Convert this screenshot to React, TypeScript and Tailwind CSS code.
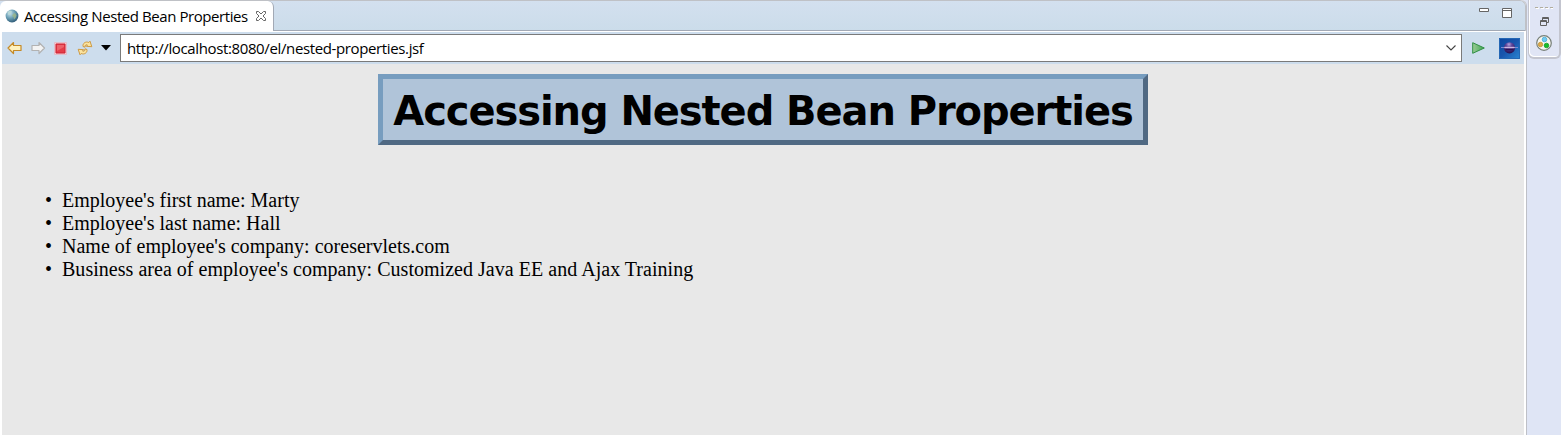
const items = [
  { text: "Employee's first name: Marty", cls: 'tracking-normal' },
  { text: "Employee's last name: Hall", cls: 'tracking-normal' },
  { text: "Name of employee's company: coreservlets.com", cls: 'tracking-[0.010px]' },
  { text: "Business area of employee's company: Customized Java EE and Ajax Training", cls: 'tracking-[0.030px]' },
];

function Globe() {
  return (
    <svg width="14" height="14" viewBox="0 0 14 14" className="shrink-0">
      <defs>
        <radialGradient id="globe" cx="35%" cy="30%" r="75%">
          <stop offset="0" stopColor="#c4e0ea" />
          <stop offset=".5" stopColor="#6b9fb5" />
          <stop offset="1" stopColor="#2c5875" />
        </radialGradient>
      </defs>
      <circle cx="7" cy="7" r="6.4" fill="url(#globe)" />
      <path d="M2.500 3 5 1.500 7 2.500 5.500 5 3.500 6Z" fill="#b9d8d8" />
      <path d="M8 5 10 4l1.500 2.500-1 2.500-1.500 1.500-.5-2.500-1.500-1Z" fill="#9db888" opacity=".8" />
    </svg>
  );
}

function Arrow({ muted = false }: { muted?: boolean }) {
  return muted ? (
    <svg width="15" height="14" viewBox="0 0 15 14" className="shrink-0">
      <path d="M8 1.500 13.500 7 8 12.500V9.500H1V4.500H8Z" fill="#f3f3f3" stroke="#b2b2b2" strokeWidth="1.200" strokeLinejoin="round" />
    </svg>
  ) : (
    <svg width="15" height="14" viewBox="0 0 15 14" className="shrink-0">
      <path d="M6.500 1.500 1 7 6.500 12.500V9.500H14V4.500H6.500Z" fill="#fff2be" stroke="#c58a27" strokeWidth="1.200" strokeLinejoin="round" />
    </svg>
  );
}

function Refresh() {
  return (
    <svg width="16" height="16" viewBox="0 0 16 16" className="shrink-0">
      <g fill="#fbe3a0" stroke="#cb9233" strokeWidth=".9" strokeLinejoin="round">
        <path d="M6 6.500C5.500 3.500 8.500 1 11.800 2.500L13 1.200 14.800 6.700 9.300 6.300 10.500 5C9 4.200 8 5 8 7.200Z" />
        <path d="M10 9.500C10.500 12.500 7.500 15 4.200 13.500L3 14.800 1.200 9.300 6.700 9.700 5.500 11C7 11.800 8 11 8 8.800Z" />
      </g>
    </svg>
  );
}

function EclipseLogo() {
  return (
    <svg width="21" height="21" viewBox="0 0 21 21" className="shrink-0">
      <defs>
        <linearGradient id="sky" x1="0" y1="0" x2="1" y2="1">
          <stop stopColor="#0c469f" />
          <stop offset=".5" stopColor="#1956ad" />
          <stop offset="1" stopColor="#2a86d3" />
        </linearGradient>
        <radialGradient id="planet" cx="45%" cy="20%" r="75%">
          <stop stopColor="#b7a4dc" />
          <stop offset=".35" stopColor="#5c459b" />
          <stop offset="1" stopColor="#281457" />
        </radialGradient>
      </defs>
      <rect width="21" height="21" fill="url(#sky)" />
      <path d="M.5.500h20v20H.5Z" fill="none" stroke="#2467b4" />
      <circle cx="10.500" cy="9.800" r="5.600" fill="url(#planet)" />
      <path d="M2 9.500h17" stroke="#7c86d0" strokeWidth="1" />
      <path d="M5.500 9.500h10" stroke="#cfb7df" strokeWidth="1.400" />
      <path d="M6.500 11.500h8" stroke="#2b1255" strokeWidth="1.200" />
    </svg>
  );
}

function TabBar() {
  return (
    <div className="flex h-[31px] shrink-0 rounded-tr-[6px] border-t border-r border-[#bfc1c6] bg-linear-to-b from-[#d3e0ef] to-[#cbdcea]">
      <div className="flex h-[30px] w-[274px] items-center rounded-t-[6px] border-r border-[#a2a9b5] bg-white pl-[5px]">
        <Globe />
        <span className="ml-[5px] w-[224px] whitespace-nowrap font-['Open_Sans',sans-serif] text-[15px] tracking-[-0.430px] text-black">Accessing Nested Bean Properties</span>
        <svg width="12" height="12" viewBox="0 0 12 12" className="ml-[7px]">
          <path d="M1.500 1.500H3.500L6 4 8.500 1.500H10.500V3.500L8 6l2.500 2.500v2h-2L6 8 3.500 10.500h-2v-2L4 6 1.500 3.500Z" fill="none" stroke="#666" />
        </svg>
      </div>
      <div className="flex flex-1 justify-end border-b border-[#a2a9b5] pt-[7px] pr-[12px]">
        <svg width="34" height="12" viewBox="0 0 34 12">
          <path d="M.5.500h9v3h-9Z" fill="white" stroke="#656565" />
          <path d="M23.500.500h9v9h-9Zm0 2h9" fill="white" stroke="#656565" />
        </svg>
      </div>
    </div>
  );
}

function Toolbar() {
  return (
    <div className="mr-[2px] ml-[2px] flex h-[32px] shrink-0 items-center bg-[#cddded] pl-[5px]">
      <Arrow />
      <span className="ml-[9px] flex"><Arrow muted /></span>
      <svg width="13" height="13" viewBox="0 0 13 13" className="ml-[8px]">
        <path d="M.5.500h12v12H.5Z" fill="#f7c9ce" stroke="#e5bcc8" />
        <path d="M2 2h9v9H2Z" fill="#e53d48" stroke="#cc2434" />
        <path d="M3 3h7v2L3 9Z" fill="#ed6269" />
      </svg>
      <span className="ml-[10px] flex"><Refresh /></span>
      <svg width="10" height="6" viewBox="0 0 10 6" className="ml-[8px]"><path d="M0 0h10L5 5.500Z" fill="black" /></svg>
      <div className="ml-[9px] flex h-[28px] w-[1342px] items-center justify-between border border-[#7a7a7a] bg-white pr-[5px] pl-[6px]">
        <span className="whitespace-nowrap font-['Open_Sans',sans-serif] text-[15px] tracking-[-0.370px] text-black">http://localhost:8080/el/nested-properties.jsf</span>
        <svg width="10" height="6" viewBox="0 0 10 6"><path d="m.5.500 4.500 4.500L9.500.500" fill="none" stroke="#444" strokeWidth="1.100" /></svg>
      </div>
      <svg width="13" height="12" viewBox="0 0 13 12" className="ml-[10px]">
        <defs><linearGradient id="go"><stop stopColor="#9acb94" /><stop offset="1" stopColor="#3fa653" /></linearGradient></defs>
        <path d="M.700.700 12.300 6 .700 11.300Z" fill="url(#go)" stroke="#2f8f43" strokeLinejoin="round" />
      </svg>
      <span className="ml-[14px] flex"><EclipseLogo /></span>
    </div>
  );
}

function SideRail() {
  return (
    <aside className="h-full w-[34px] shrink-0 bg-[#dfe5f5]">
      <div className="ml-px flex h-[59px] w-[33px] flex-col items-center rounded-b-[6px] border-r-2 border-b-2 border-l border-[#c3c5cf] bg-[#e0e5f5] shadow-[inset_1px_-1px_0_white]">
        <svg width="18" height="3" viewBox="0 0 18 3" className="mt-[6px]">
          <path d="M0 1.500h3M5 1.500h3M10 1.500h3M15 1.500h3" stroke="#b1ad9e" />
          <path d="M1 2.500h3M6 2.500h3M11 2.500h3M16 2.500h2" stroke="white" />
        </svg>
        <svg width="9" height="9" viewBox="0 0 9 9" className="mt-[8px]">
          <path d="M2.500 3V.500h6v5H6.500M2.500 1.500h6M.5 3.500h6v5H.5Zm0 1h6" fill="none" stroke="#606060" />
        </svg>
        <svg width="16" height="16" viewBox="0 0 16 16" className="mt-[9px]">
          <circle cx="8" cy="8" r="7.300" fill="#f5f5ef" stroke="#777f78" strokeWidth="1.200" />
          <circle cx="8.500" cy="4.500" r="2.300" fill="#71caf1" stroke="#35a5d9" strokeWidth=".7" />
          <circle cx="4.500" cy="9.500" r="2.200" fill="#dfab48" stroke="#b98727" strokeWidth=".7" />
          <circle cx="10.500" cy="10.500" r="2.300" fill="#16bd2b" stroke="#079716" strokeWidth=".7" />
        </svg>
      </div>
    </aside>
  );
}

export default function App() {
  return (
    <div className="flex h-[435px] w-[1561px] overflow-hidden bg-[#dfe5f5]">
      <main className="flex h-full w-[1527px] flex-col rounded-t-[6px] border-r border-[#bec0c7] bg-white">
        <TabBar />
        <div className="h-px shrink-0 bg-white" />
        <Toolbar />
        <section className="mr-[2px] ml-[2px] flex flex-1 flex-col bg-[#e8e8e8]">
          <h1 className="mt-[10px] ml-[376px] flex h-[71px] w-[770px] items-center justify-center border-[5px] border-t-[#779dbf] border-r-[#506983] border-b-[#506983] border-l-[#779dbf] bg-[#b0c4d9] pt-[2px] font-['DejaVu_Sans',sans-serif] text-[40px] font-bold tracking-[-1.080px] whitespace-nowrap text-black">
            Accessing Nested Bean Properties
          </h1>
          <ul className="mt-[44px] ml-[43px] font-['Liberation_Serif',serif] text-[20px] leading-[23px] text-black">
            {items.map(({ text, cls }) => (
              <li key={text} className="flex">
                <span className="w-[17px]">•</span>
                <span className={cls}>{text}</span>
              </li>
            ))}
          </ul>
        </section>
      </main>
      <SideRail />
    </div>
  );
}
